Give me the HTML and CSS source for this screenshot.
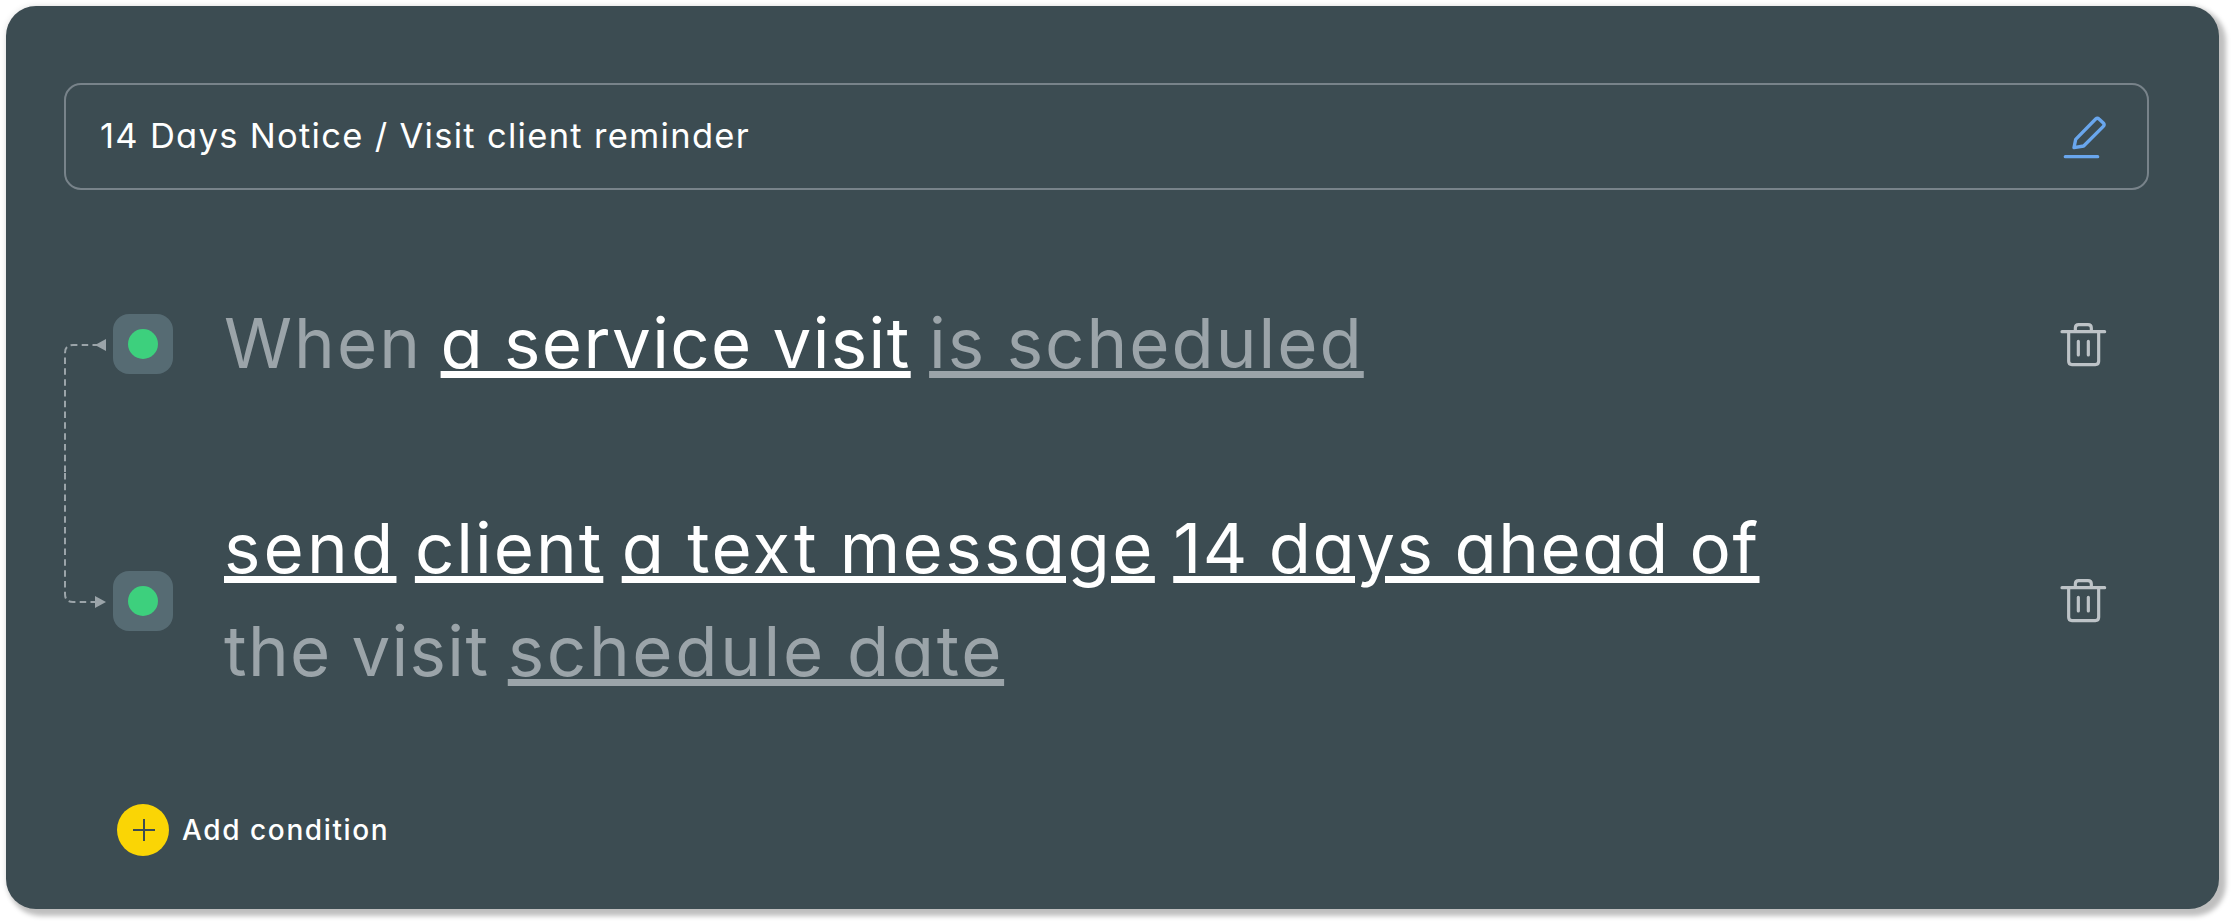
FILE: index.html
```
<!DOCTYPE html>
<html lang="en">
<head>
	<meta charset="UTF-8">
	<title>14 Days Notice / Visit client reminder</title>
	<link rel="stylesheet" href="styles.css">
</head>
<body>
	<div class="card">
		<div class="title-field">
			<span class="title">14 Days Notice / Visit client reminder</span>
			<svg class="edit-icon" viewBox="0 0 144 144">
				<path d="M36 104L41 79L101 18Q106 13 111 18L124 30Q129 35 124 40L65 99Z"/>
				<path d="M10 131H107"/>
			</svg>
		</div>
		<div class="rules">
			<svg class="connector" viewBox="0 0 49 411">
				<path class="dashed" d="M35 52H9Q1 52 1 60V180"/>
				<path class="dashed" d="M33 309H9Q1 309 1 301V180"/>
				<path class="arrow" d="M31 52L42 46V58Z"/>
				<path class="arrow" d="M42 309L31 303V315Z"/>
			</svg>
			<div class="marker"><span></span></div>
			<p class="sentence">
				<span class="when">When</span>
				<u class="service">a service visit</u>
				<u class="muted scheduled">is scheduled</u>
			</p>
			<svg class="trash-icon" viewBox="0 0 144 132">
				<path d="M6 26H134M46 24V15Q46 5 56 5H84Q94 5 94 15V24"/>
				<path d="M26 28V115Q26 125 36 125H106Q116 125 116 115V28M55 55V96M85 55V96"/>
			</svg>
			<div class="marker"><span></span></div>
			<p class="sentence">
				<u class="send">send</u>
				<u class="client">client</u>
				<u class="message">a text message</u>
				<u class="days">14 days ahead of</u><br>
				<span class="visit">the visit</span>
				<u class="muted date">schedule date</u>
			</p>
			<svg class="trash-icon" viewBox="0 0 144 132">
				<path d="M6 26H134M46 24V15Q46 5 56 5H84Q94 5 94 15V24"/>
				<path d="M26 28V115Q26 125 36 125H106Q116 125 116 115V28M55 55V96M85 55V96"/>
			</svg>
		</div>
		<div class="add">
			<svg class="plus-icon" viewBox="0 0 52 52">
				<circle cx="26" cy="26" r="26"/>
				<path d="M16 26H38M27 15V37"/>
			</svg>
			<span>Add condition</span>
		</div>
	</div>
</body>
</html>
```
FILE: styles.css
```
*{
	margin: 0;
	padding: 0;
	box-sizing: border-box;
}
body{
	height: 923px;
	padding: 6px;
	background: #fff;
	font-family: Inter, "Open Sans", sans-serif;
	font-feature-settings: "cv11";
	color: #fff;
	overflow: hidden;
}
.card{
	width: 2213px;
	height: 903px;
	padding: 77px 70px 0 58px;
	background: #3c4c52;
	border-radius: 30px;
	box-shadow: 5px 5px 5px 2px #bfbfbf, 0 0 6px rgba(0,0,0,.12);
}
.title-field{
	display: flex;
	align-items: center;
	justify-content: space-between;
	height: 107px;
	padding: 0 37px 0 34px;
	border: 2px solid #78838a;
	border-radius: 17px;
}
.title{
	padding-bottom: 2px;
	font-size: 34.5px;
	letter-spacing: 1.3px;
}
.edit-icon{
	width: 48px;
	height: 48px;
	fill: none;
	stroke: #69a6ed;
	stroke-width: 10;
	stroke-linecap: round;
	stroke-linejoin: round;
}
.rules{
	display: grid;
	grid-template-columns: 49px 60px 1fr 48px;
	grid-template-rows: 103px 206px;
	row-gap: 102px;
	align-items: center;
	margin-top: 103px;
	padding-right: 41px;
}
.connector{
	grid-row: 1 / 3;
	width: 49px;
	height: 411px;
}
.dashed{
	fill: none;
	stroke: #9ba4a9;
	stroke-width: 2;
	stroke-dasharray: 6.5 4.3;
}
.arrow{
	fill: #9ba4a9;
}
.marker{
	display: flex;
	align-items: center;
	justify-content: center;
	width: 60px;
	height: 60px;
	margin-bottom: 1px;
	background: #566b73;
	border-radius: 16px;
}
.marker span{
	width: 30px;
	height: 30px;
	background: #3dd07d;
	border-radius: 50%;
}
.sentence{
	padding: 0 0 2px 51px;
	font-size: 69px;
	line-height: 103px;
	color: #9ba4a9;
	white-space: nowrap;
	word-spacing: -1px;
}
.sentence u{
	color: #fff;
	text-decoration-thickness: 6.5px;
	text-underline-offset: 3px;
}
.sentence .muted{
	color: #9ba4a9;
}
/* tracking of each phrase */
.when{
	letter-spacing: 2.1px;
}
.service{
	letter-spacing: 1.4px;
}
.scheduled{
	letter-spacing: 2px;
}
.send{
	letter-spacing: 3.2px;
}
.client{
	letter-spacing: 2px;
}
.message{
	letter-spacing: 2.4px;
}
.days{
	letter-spacing: 1.5px;
}
.visit{
	letter-spacing: 1.35px;
}
.date{
	letter-spacing: 2.65px;
}
.trash-icon{
	width: 48px;
	height: 44px;
	fill: none;
	stroke: #bdc3c7;
	stroke-width: 9.5;
	stroke-linecap: round;
	stroke-linejoin: round;
}
.add{
	display: flex;
	align-items: center;
	gap: 13px;
	margin: 100px 0 0 53px;
	font-size: 28px;
	font-weight: 500;
	letter-spacing: 1.6px;
}
.add span{
	padding-bottom: 1px;
}
.plus-icon{
	width: 52px;
	height: 52px;
	fill: #fad505;
}
.plus-icon path{
	stroke: #3c4c52;
	stroke-width: 2;
}
```
